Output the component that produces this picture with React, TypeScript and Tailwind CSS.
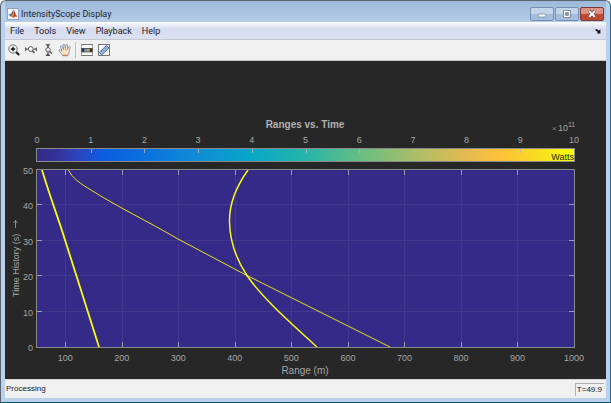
const PLOT = { left: 37, right: 574, top: 170, bottom: 347 };
const BAR = { top: 149, bottom: 161 };

const menus = ["File", "Tools", "View", "Playback", "Help"];
const ranges = [100, 200, 300, 400, 500, 600, 700, 800, 900, 1000];
const times = [0, 10, 20, 30, 40, 50];
const watts = [0, 1, 2, 3, 4, 5, 6, 7, 8, 9, 10];

const colormap = [
  ["0%", "#352a87"],
  ["4%", "#34339b"],
  ["8%", "#2a46c0"],
  ["12%", "#0a5ce0"],
  ["20%", "#0b71de"],
  ["30%", "#118cd6"],
  ["40%", "#07a7c8"],
  ["50%", "#25b5a9"],
  ["60%", "#66be84"],
  ["70%", "#a8be69"],
  ["80%", "#e4ba50"],
  ["86%", "#ffc03a"],
  ["93%", "#f8dc22"],
  ["98%", "#f9f50f"],
  ["100%", "#f9fb0e"],
];

const xOf = (range: number) => PLOT.left + ((range - 50) / 950) * (PLOT.right - PLOT.left);
const yOf = (time: number) => PLOT.bottom - (time / 50) * (PLOT.bottom - PLOT.top);
const wattX = (w: number) => PLOT.left + (w / 10) * (PLOT.right - PLOT.left);

function MatlabLogo() {
  return (
    <svg viewBox="0 0 12 12" className="h-3 w-3 shrink-0" aria-hidden="true">
      <rect x="0.5" y="0.5" width="11" height="11" fill="#f4f6fa" stroke="#8fa3bd" />
      <path d="M1.5 6.8 4.2 5.4 5.4 7.2 3.6 8.6Z" fill="#3c7fc0" />
      <path d="M4.2 5.4C5.2 4.8 5.6 2.6 6.6 2L5.4 7.2Z" fill="#274f86" />
      <path d="M6.6 2C7.6 2.6 8.6 6.8 10.5 9 8.6 7.8 7.4 8.6 6.2 10.2 5.6 9 4.8 8.6 3.6 8.6 5.2 7.6 6 4.6 6.6 2Z" fill="#c8411f" />
      <path d="M6.6 2C7 4 7.2 6.4 6.2 10.2 5.6 9 4.8 8.6 3.6 8.6 5.2 7.6 6 4.6 6.6 2Z" fill="#e8873a" />
    </svg>
  );
}

function TitleBar() {
  return (
    <header className="flex h-[21px] items-center bg-linear-to-b from-[#9db8d8] to-[#b4cce8] px-0.5 pt-1">
      <MatlabLogo />
      <h1 className="ml-0.5 grow font-['Roboto',sans-serif] text-[9px] leading-3 text-[#1b2530]">
        IntensityScope Display
      </h1>
      <div className="flex gap-px">
        <button
          aria-label="Minimize"
          className="flex h-3.5 w-6 items-center justify-center rounded-xs border border-[#7590b2] bg-linear-to-b from-[#c3d5ea] from-50% to-[#a3bddb] to-50%"
        >
          <svg viewBox="0 0 10 10" className="h-2.5 w-2.5">
            <rect x="1.2" y="5" width="7.6" height="3" rx="0.5" fill="#fff" stroke="#66758a" strokeWidth="0.7" />
          </svg>
        </button>
        <button
          aria-label="Maximize"
          className="flex h-3.5 w-6 items-center justify-center rounded-xs border border-[#7590b2] bg-linear-to-b from-[#c3d5ea] from-50% to-[#a3bddb] to-50%"
        >
          <svg viewBox="0 0 10 10" className="h-2.5 w-2.5">
            <rect x="1.5" y="1.5" width="7" height="7" rx="0.5" fill="#fff" stroke="#66758a" strokeWidth="0.8" />
            <rect x="3.8" y="3.8" width="2.4" height="2.4" fill="#a9c0dc" stroke="#56657a" strokeWidth="0.9" />
          </svg>
        </button>
        <button
          aria-label="Close"
          className="flex h-3.5 w-6 items-center justify-center rounded-xs border border-[#7d3a38] bg-linear-to-b from-[#dc9485] from-45% to-[#c04a31] to-50%"
        >
          <svg viewBox="0 0 10 10" className="h-2.5 w-2.5">
            <path d="M2 2 8 8M8 2 2 8" stroke="#6b4447" strokeWidth="3.2" />
            <path d="M2.2 2.2 7.8 7.8M7.8 2.2 2.2 7.8" stroke="#fff" strokeWidth="2" />
          </svg>
        </button>
      </div>
    </header>
  );
}

function MenuBar() {
  return (
    <nav className="flex h-[18px] items-center border-b border-[#c4c8d2] bg-linear-to-b from-white via-[#d6dbee] via-40% to-[#dbe1f3] px-[5px]">
      <div className="flex grow gap-2.5">
        {menus.map((name) => (
          <button key={name} className="font-['Roboto',sans-serif] text-[9px] leading-3 text-[#1c1c24]">
            {name}
          </button>
        ))}
      </div>
      <button aria-label="Undock">
        <svg viewBox="0 0 6 6" className="h-1.5 w-1.5">
          <path d="M0.3 1.2H2L3.6 2.6 5.4 1.4V5.6H1.8L2.8 4 0.3 2.2Z" fill="#15151c" />
        </svg>
      </button>
    </nav>
  );
}

function ToolBar() {
  return (
    <div role="toolbar" className="flex h-[21px] items-center border-b border-[#c9c9c9] bg-[#f0f0f0]">
      <button aria-label="Zoom in" className="flex w-[17px] justify-center">
        <svg viewBox="0 0 14 14" className="h-3.5 w-3.5" fill="none">
          <circle cx="6" cy="6" r="4.2" fill="#f5f8fa" stroke="#6a7076" strokeWidth="1" />
          <path d="M6 3.8V8.2M3.8 6H8.2" stroke="#151515" strokeWidth="1.4" />
          <path d="M9 9 12.2 12" stroke="#222" strokeWidth="2.2" />
        </svg>
      </button>
      <button aria-label="Zoom X" className="flex w-[17px] justify-center">
        <svg viewBox="0 0 14 14" className="h-3.5 w-3.5" fill="none">
          <circle cx="6.8" cy="6" r="2.4" fill="#f5f8fa" stroke="#5a5a5a" />
          <path d="M8.4 7.8 10.4 10" stroke="#444" strokeWidth="1.4" />
          <path d="M1 4V8.5L3.8 6.2ZM13 4V8.5L10.2 6.2Z" fill="#6a6a6a" />
          <path d="M1 6.2H4.2M9.4 6.2H13" stroke="#555" strokeWidth="0.8" />
        </svg>
      </button>
      <button aria-label="Zoom Y" className="flex w-[17px] justify-center">
        <svg viewBox="0 0 14 14" className="h-3.5 w-3.5" fill="none">
          <circle cx="7" cy="6.8" r="2.2" fill="#f5f8fa" stroke="#5a5a5a" />
          <path d="M8.6 8.4 10.8 10.4" stroke="#444" strokeWidth="1.4" />
          <path d="M4.4 1.2H9.4L7 4ZM4.4 13H9.4L7 10Z" fill="#4c4c4c" />
          <path d="M7 2V4.6M7 9V12" stroke="#444" strokeWidth="0.9" />
        </svg>
      </button>
      <button aria-label="Pan" className="flex w-[17px] justify-center">
        <svg viewBox="0 0 14 14" className="h-3.5 w-3.5">
          <path
            d="M4.6 12.6C4 11 2.2 9.4 1 7.6 0.6 6.6 1.8 6.2 2.6 7L4 8.2 2.4 3.8C2.2 2.6 3.6 2.4 4 3.4L5.3 6 5 2C5 0.8 6.6 0.8 6.8 1.8L7.4 5.6 8 2C8.2 1 9.6 1.2 9.6 2.2L9.4 6 10.8 3.6C11.4 2.8 12.6 3.4 12.2 4.4L11.2 8.6C11 10.4 10.4 11.4 9.8 12.8Z"
            fill="#fbe0c4"
            stroke="#7f96b8"
            strokeWidth="0.9"
          />
          <path d="M5.3 6 5.8 7.4M7.4 5.6V7.2M9.4 6 9 7.4" stroke="#b98b66" strokeWidth="0.7" />
          <path d="M4.8 12.4H9.8" stroke="#c9824c" strokeWidth="1.4" />
        </svg>
      </button>
      <span className="mx-0.5 h-4 w-px bg-[#bdbdbd]" />
      <button aria-label="Scale axes" className="flex w-[17px] justify-center">
        <svg viewBox="0 0 14 14" className="h-3.5 w-3.5">
          <rect x="1.5" y="1.5" width="11" height="11" fill="#f8f8f8" stroke="#a0a0a0" />
          <path d="M1 1.5H13M1 12.5H13" stroke="#777" />
          <rect x="1" y="5" width="12" height="4.4" fill="#55565c" />
          <rect x="4.2" y="6" width="2.6" height="2.4" fill="#6aa5c8" />
          <rect x="6.8" y="6" width="2.8" height="2.4" fill="#e0a04b" />
          <path d="M1.8 7.2 4 5.6V8.8ZM12.2 7.2 10 5.6V8.8Z" fill="#1c1c1c" />
        </svg>
      </button>
      <button aria-label="Measurements" className="flex w-[17px] justify-center">
        <svg viewBox="0 0 14 14" className="h-3.5 w-3.5">
          <rect x="1.5" y="1.5" width="11" height="11" fill="#f6f6f6" stroke="#777" />
          <path d="M2.2 9.6 9.4 2.4 12 4.8 4.8 12Z" fill="#8fb6dc" stroke="#46698f" strokeWidth="0.9" />
          <path d="M4 8 5 9M5.6 6.4 6.6 7.4M7.2 4.8 8.2 5.8M8.8 3.2 9.8 4.2" stroke="#36557a" strokeWidth="0.6" />
        </svg>
      </button>
    </div>
  );
}

function Scope() {
  const { left, right, top, bottom } = PLOT;
  return (
    <svg
      viewBox="5 61 601 318"
      className="block h-auto w-full bg-[#272727] font-['Liberation_Sans',sans-serif]"
      role="img"
      aria-label="Ranges vs. Time"
    >
      <defs>
        <linearGradient id="parula">
          {colormap.map(([offset, color]) => (
            <stop key={offset} offset={offset} stopColor={color} />
          ))}
        </linearGradient>
      </defs>

      <text x="305" y="128" textAnchor="middle" fontSize="10" fontWeight="bold" fill="#b0b0b0">
        Ranges vs. Time
      </text>
      <text x="552" y="131" fontSize="8" fill="#8c8c8c">×</text>
      <text x="558" y="131" fontSize="9" fill="#a6a6a6">10</text>
      <text x="568" y="127" fontSize="7" fill="#a6a6a6">11</text>

      {/* colour bar */}
      <rect x={left} y={BAR.top} width={right - left} height={BAR.bottom - BAR.top} fill="url(#parula)" />
      <rect x={left - 0.5} y={BAR.top - 0.5} width={right - left + 1} height={BAR.bottom - BAR.top + 1} fill="none" stroke="#8a8a8a" />
      {watts.map((w) => (
        <g key={w}>
          <path d={`M${Math.round(wattX(w)) + 0.5} ${BAR.top}v4`} stroke="#b5b5b5" strokeOpacity={w % 10 ? 0.8 : 0} />
          <text x={wattX(w)} y="143" textAnchor="middle" fontSize="9" fill="#a6a6a6">
            {w}
          </text>
        </g>
      ))}
      <text x={right} y="160" textAnchor="end" fontSize="9" fill="#1c1c00">
        Watts
      </text>

      {/* plot area and grid */}
      <rect x={left} y={top} width={right - left} height={bottom - top} fill="#352a87" />
      {ranges.slice(0, -1).map((r) => {
        const x = Math.round(xOf(r)) + 0.5;
        return (
          <g key={r}>
            <path d={`M${x} ${top}V${bottom}`} stroke="#42388e" />
            <path d={`M${x} ${top}v5M${x} ${bottom}v-5`} stroke="#9c9cb0" />
          </g>
        );
      })}
      {times.slice(1, -1).map((t) => {
        const y = Math.round(yOf(t)) - 0.5;
        return (
          <g key={t}>
            <path d={`M${left} ${y}H${right}`} stroke="#42388e" />
            <path d={`M${left} ${y}h5M${right} ${y}h-5`} stroke="#9c9cb0" />
          </g>
        );
      })}
      <g fill="none" stroke="#f9fb0e">
        <path d="M42 170C51 200 58 217 65 240L80 287 99 347" strokeWidth="1.8" />
        <path d="M68.5 170C72 178 81 184 91 190C116 206 149 222 178 239L246 275 318 311 390 347" strokeWidth="0.9" />
        <path d="M248 170C236 187 229 203 229.5 222C230 245 238 262 247 275.5C263 299 292 324 317 347" strokeWidth="1.5" />
      </g>
      <rect x={left - 0.5} y={top - 0.5} width={right - left + 1} height={bottom - top + 1} fill="none" stroke="#8a8a8a" />

      {ranges.map((r) => (
        <text key={r} x={xOf(r)} y="361" textAnchor="middle" fontSize="9" fill="#a6a6a6">
          {r}
        </text>
      ))}
      {times.map((t) => (
        <text key={t} x="33" y={yOf(t) + 4} textAnchor="end" fontSize="9" fill="#a6a6a6">
          {t}
        </text>
      ))}
      <text x="305" y="374" textAnchor="middle" fontSize="10" fill="#a6a6a6">
        Range (m)
      </text>
      <text transform="translate(19 297) rotate(-90)" fontSize="9" fill="#a6a6a6">
        Time History (s)
      </text>
      <path d="M15.5 228V220.5M13.5 223 15.5 220.5 17.5 223" fill="none" stroke="#a6a6a6" strokeWidth="0.8" />
    </svg>
  );
}

function StatusBar() {
  return (
    <footer className="flex h-[19px] items-center justify-between border-t border-[#d8d8d8] bg-[#f0f0f0] pl-px pr-0.5 font-['Liberation_Sans',sans-serif] text-[8px] leading-3 text-[#1a1a1a]">
      <span>Processing</span>
      <span className="border-l border-t border-[#b0b0b0] pl-px pr-0.5">T=49.9</span>
    </footer>
  );
}

export default function App() {
  return (
    <div className="rounded-t-md border border-[#5a6470] border-b-[#0a5566] border-r-[#2a6a7c] bg-[#b9d1ea] px-1 pb-1">
      <TitleBar />
      <MenuBar />
      <ToolBar />
      <Scope />
      <StatusBar />
    </div>
  );
}
